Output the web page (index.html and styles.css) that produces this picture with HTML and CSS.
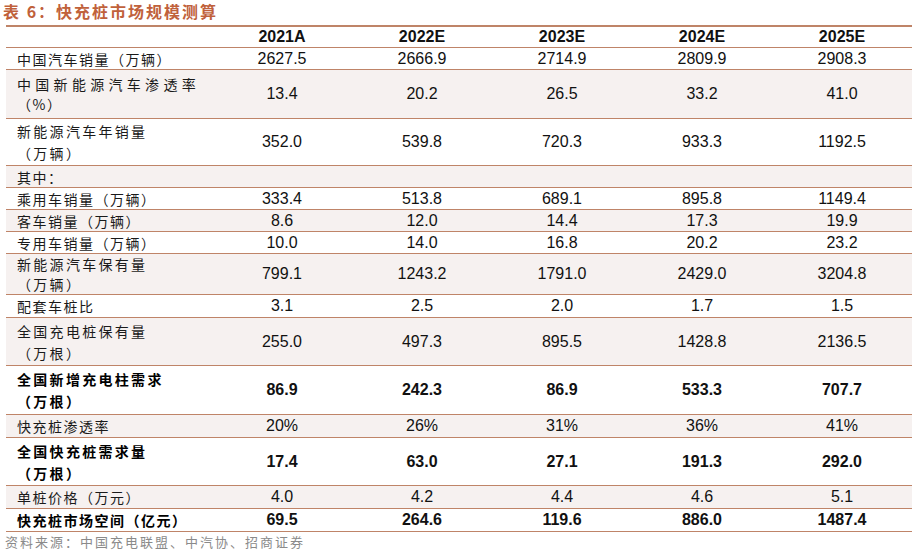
FILE: index.html
```html
<!DOCTYPE html>
<html lang="zh">
<head>
<meta charset="utf-8">
<link rel="stylesheet" href="styles.css">
</head>
<body>
<div class="page">
  <div class="title">表 6：快充桩市场规模测算</div>
  <table class="grid">
    <colgroup><col class="c-label"><col class="c-val"><col class="c-val"><col class="c-val"><col class="c-val"><col class="c-val"></colgroup>
    <thead>
      <tr class="hdr"><th></th><th>2021A</th><th>2022E</th><th>2023E</th><th>2024E</th><th>2025E</th></tr>
    </thead>
    <tbody>
      <tr class="h22"><td class="lbl">中国汽车销量（万辆）</td><td>2627.5</td><td>2666.9</td><td>2714.9</td><td>2809.9</td><td>2908.3</td></tr>
      <tr class="h49 alt"><td class="lbl"><span class="wide">中国新能源汽车渗透率</span><br>（%）</td><td>13.4</td><td>20.2</td><td>26.5</td><td>33.2</td><td>41.0</td></tr>
      <tr class="h47"><td class="lbl mid">新能源汽车年销量<br>（万辆）</td><td>352.0</td><td>539.8</td><td>720.3</td><td>933.3</td><td>1192.5</td></tr>
      <tr class="h22 alt"><td class="lbl">其中：</td><td></td><td></td><td></td><td></td><td></td></tr>
      <tr class="h22"><td class="lbl">乘用车销量（万辆）</td><td>333.4</td><td>513.8</td><td>689.1</td><td>895.8</td><td>1149.4</td></tr>
      <tr class="h22 alt"><td class="lbl">客车销量（万辆）</td><td>8.6</td><td>12.0</td><td>14.4</td><td>17.3</td><td>19.9</td></tr>
      <tr class="h22"><td class="lbl">专用车销量（万辆）</td><td>10.0</td><td>14.0</td><td>16.8</td><td>20.2</td><td>23.2</td></tr>
      <tr class="h41 alt"><td class="lbl mid tight">新能源汽车保有量<br>（万辆）</td><td>799.1</td><td>1243.2</td><td>1791.0</td><td>2429.0</td><td>3204.8</td></tr>
      <tr class="h23"><td class="lbl">配套车桩比</td><td>3.1</td><td>2.5</td><td>2.0</td><td>1.7</td><td>1.5</td></tr>
      <tr class="h48 alt"><td class="lbl mid">全国充电桩保有量<br>（万根）</td><td>255.0</td><td>497.3</td><td>895.5</td><td>1428.8</td><td>2136.5</td></tr>
      <tr class="h49 bold"><td class="lbl mid">全国新增充电柱需求<br>（万根）</td><td>86.9</td><td>242.3</td><td>86.9</td><td>533.3</td><td>707.7</td></tr>
      <tr class="h23 alt"><td class="lbl">快充桩渗透率</td><td>20%</td><td>26%</td><td>31%</td><td>36%</td><td>41%</td></tr>
      <tr class="h48 bold"><td class="lbl mid">全国快充桩需求量<br>（万根）</td><td>17.4</td><td>63.0</td><td>27.1</td><td>191.3</td><td>292.0</td></tr>
      <tr class="h23 alt"><td class="lbl">单桩价格（万元）</td><td>4.0</td><td>4.2</td><td>4.4</td><td>4.6</td><td>5.1</td></tr>
      <tr class="h23 bold"><td class="lbl">快充桩市场空间（亿元）</td><td>69.5</td><td>264.6</td><td>119.6</td><td>886.0</td><td>1487.4</td></tr>
    </tbody>
  </table>
  <div class="source">资料来源：中国充电联盟、中汽协、招商证券</div>
</div>
</body>
</html>
```

FILE: styles.css
```css
html, body {
  margin: 0;
  padding: 0;
  background: #ffffff;
}

.page {
  width: 919px;
  height: 551px;
  overflow: hidden;
  font-family: "Liberation Sans", "Noto Sans CJK SC", sans-serif;
  color: #111;
}

.title {
  height: 25px;
  line-height: 23px;
  padding-left: 3px;
  font-family: "Noto Sans CJK SC", sans-serif;
  font-weight: 700;
  font-size: 16px;
  letter-spacing: 2px;
  color: #c0613b;
}

.grid {
  margin-left: 6px;
  width: 906px;
  border-collapse: collapse;
  table-layout: fixed;
  border-top: 2px solid #bf8468;
}

.c-label { width: 206px; }
.c-val { width: 140px; }

.grid th,
.grid td {
  padding: 0;
  border-bottom: 1px solid #bf8468;
  text-align: center;
  vertical-align: middle;
  font-size: 16px;
  line-height: 20px;
}

.grid th {
  font-weight: 700;
  height: 20px;
}

.grid .lbl {
  text-align: left;
  padding-left: 11px;
  font-family: "Noto Sans CJK SC", sans-serif;
  font-size: 14px;
  letter-spacing: 1.5px;
  line-height: 20px;
  color: #1a1a1a;
}

.grid .lbl.mid { letter-spacing: 2.3px; line-height: 22px; }
.grid .lbl.tight { line-height: 20px; }
.grid .wide { letter-spacing: 4.3px; }

.alt td { background: #f6f1f0; }

.bold td { font-weight: 700; }
.bold .lbl { color: #000; }

.h22 td { height: 21px; }
.h23 td { height: 22px; }
.h41 td { height: 40px; }
.h47 td { height: 46px; }
.h48 td { height: 47px; }
.h49 td { height: 48px; }

.source {
  margin-top: 1px;
  padding-left: 5px;
  font-family: "Noto Sans CJK SC", sans-serif;
  font-size: 13px;
  letter-spacing: 2px;
  color: #8a8a8a;
  line-height: 17px;
}
```
